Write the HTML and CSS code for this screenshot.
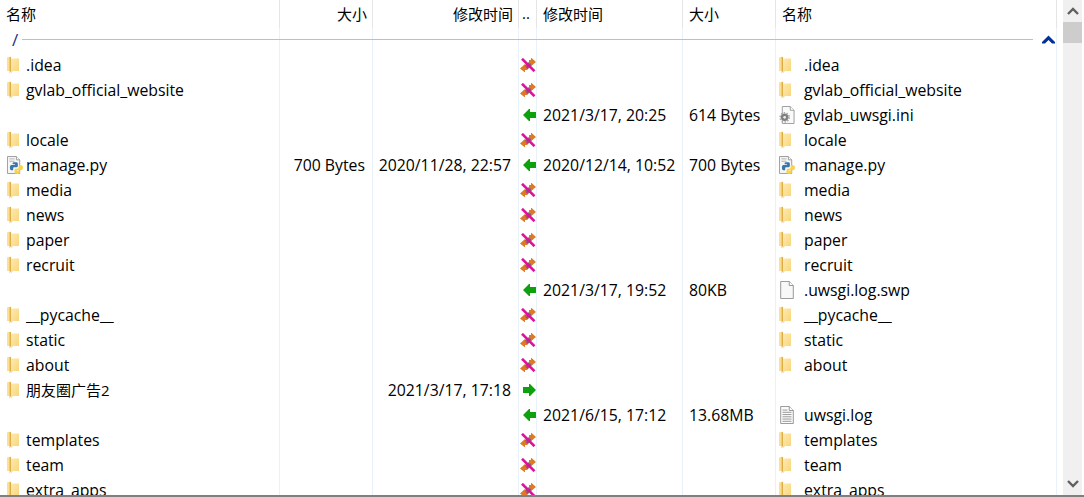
FILE: index.html
```html
<!DOCTYPE html>
<html lang="en">
<head>
    <meta charset="UTF-8">
    <title>File compare</title>
    <link rel="stylesheet" href="styles.css">
</head>
<body>
    <svg class="icon-defs" width="0" height="0">
        <defs>
            <linearGradient id="folder-front" x1="0" y1="0" x2="1" y2="1">
                <stop offset="0" stop-color="#fdeab0"/>
                <stop offset="1" stop-color="#f8d477"/>
            </linearGradient>
            <symbol id="folder" viewBox="0 0 16 18">
                <path d="M0 1.5 L3.5 .5 L4.5 3 H12 V15 H0 Z" fill="#fadf94"/>
                <path d="M2.6 1 L4 1 V15 L2.6 17.5 Z" fill="#dfae48"/>
                <path d="M4 2.5 H12 V15 H6 L4 17.5 Z" fill="url(#folder-front)"/>
            </symbol>
            <symbol id="file" viewBox="0 0 17 20">
                <path d="M1.5 .5 H11 L15.5 5 V19.5 H1.5 Z" fill="#f8f8f8" stroke="#8c8c8c"/>
                <path d="M11 .5 V5 H15.5" fill="#fff" stroke="#8c8c8c"/>
            </symbol>
            <symbol id="file-log" viewBox="0 0 17 20">
                <path d="M1.5 .5 H11 L15.5 5 V19.5 H1.5 Z" fill="#fbfbfb" stroke="#8c8c8c"/>
                <path d="M11 .5 V5 H15.5" fill="#fff" stroke="#8c8c8c"/>
                <path d="M3.5 4.5 H9 M3.5 7 H13.5 M3.5 9.5 H13.5 M3.5 12 H13.5 M3.5 14.5 H13.5 M3.5 17 H13.5" stroke="#8f8f8f"/>
            </symbol>
            <symbol id="file-ini" viewBox="0 0 17 19">
                <path d="M3.5 .5 H12 L16 4.5 V18.5 H3.5 Z" fill="#fafafa" stroke="#9a9a9a"/>
                <path d="M12 .5 V4.5 H16" fill="#fff" stroke="#9a9a9a"/>
                <circle cx="6" cy="12" r="4" fill="#808080"/>
                <circle cx="6" cy="12" r="4.8" fill="none" stroke="#a8a8a8" stroke-dasharray="1.5 1.5" stroke-width="1.8"/>
                <circle cx="6" cy="12" r="1.4" fill="#eee"/>
            </symbol>
            <symbol id="file-py" viewBox="0 0 17 19">
                <path d="M.5 .5 H10 L13.5 4 V18.5 H.5 Z" fill="#f6f6f6" stroke="#9a9a9a"/>
                <path d="M10 .5 V4 H13.5" fill="#fff" stroke="#9a9a9a"/>
                <path d="M2.5 3 H8 M2.5 5.5 H8" stroke="#b0b0b0"/>
                <path d="M6 7.5 Q6 6.5 7.5 6.5 H10 Q11.5 6.5 11.5 8 V10.5 Q11.5 12 10 12 H7.5 Q6.5 12 6.5 13.5 V15 H4.5 Q3 15 3 12.5 Q3 9.5 4.5 9.5 H8.5 V8.8 H6 Z" fill="#3a76ab"/>
                <path d="M12.5 9.5 H14 Q17 9.5 17 12.5 Q17 15 15 15 H10.5 V15.7 H13.5 V17.5 Q13.5 19 11 19 Q8 19 8 17.5 V15 Q8 13.5 9.5 13.5 H11 Q12.5 13.5 12.5 12 Z" fill="#fbd344"/>
            </symbol>
            <symbol id="arrow-left" viewBox="0 0 13 12">
                <path d="M0 6 L6 0 H7 V3 H13 V9 H7 V12 H6 Z" fill="#0da10d"/>
            </symbol>
            <symbol id="arrow-right" viewBox="0 0 13 12">
                <path d="M13 6 L7 0 H6 V3 H0 V9 H6 V12 H7 Z" fill="#0da10d"/>
            </symbol>
            <symbol id="conflict" viewBox="0 0 16 14">
                <path d="M4 7.5 L12 2 L13 6 L7 12 H4 Z" fill="#77706d"/>
                <path d="M0 10.5 L5 6 V8.5 H7 V12 H5 V14.5 Z" fill="#dd7a28"/>
                <path d="M16 4 L11 -.5 V2 H9 V5.5 H11 V8 Z" fill="#dd7a28"/>
                <path d="M2 .8 L14.5 13.2" stroke="#e0109a" stroke-width="2.6"/>
                <path d="M6 10 L10 6" stroke="#e0109a" stroke-width="1.5" opacity=".7"/>
            </symbol>
        </defs>
    </svg>

    <div class="window">
        <div class="panes">
            <div class="row header">
                <div class="cell">名称</div>
                <div class="cell right">大小</div>
                <div class="cell right">修改时间</div>
                <div class="cell dots">..</div>
                <div class="cell">修改时间</div>
                <div class="cell">大小</div>
                <div class="cell">名称</div>
            </div>
            <div class="row path-row">
                <div class="cell"></div><div class="cell"></div><div class="cell"></div><div class="cell"></div><div class="cell"></div><div class="cell"></div><div class="cell"></div>
                <div class="path-bar">
                    <span class="path-text">/</span>
                    <span class="path-line"></span>
                    <svg class="path-up" width="13" height="9" viewBox="0 0 13 9"><path d="M0 7 L6.5 0.5 L13 7 L13 8.5 L10 8.5 L6.5 5 L3 8.5 L0 8.5 Z" fill="#003399"/></svg>
                </div>
            </div>

            <div class="row">
                <div class="cell name"><svg class="ico"><use href="#folder"/></svg>.idea</div>
                <div class="cell right"></div><div class="cell right"></div>
                <div class="cell act"><svg class="ico-act"><use href="#conflict"/></svg></div>
                <div class="cell"></div><div class="cell"></div>
                <div class="cell name name-r"><svg class="ico"><use href="#folder"/></svg>.idea</div>
            </div>
            <div class="row">
                <div class="cell name"><svg class="ico"><use href="#folder"/></svg>gvlab_official_website</div>
                <div class="cell right"></div><div class="cell right"></div>
                <div class="cell act"><svg class="ico-act"><use href="#conflict"/></svg></div>
                <div class="cell"></div><div class="cell"></div>
                <div class="cell name name-r"><svg class="ico"><use href="#folder"/></svg>gvlab_official_website</div>
            </div>
            <div class="row">
                <div class="cell name"></div>
                <div class="cell right"></div><div class="cell right"></div>
                <div class="cell act"><svg class="ico-arrow"><use href="#arrow-left"/></svg></div>
                <div class="cell">2021/3/17, 20:25</div><div class="cell">614 Bytes</div>
                <div class="cell name name-r"><svg class="ico"><use href="#file-ini"/></svg>gvlab_uwsgi.ini</div>
            </div>
            <div class="row">
                <div class="cell name"><svg class="ico"><use href="#folder"/></svg>locale</div>
                <div class="cell right"></div><div class="cell right"></div>
                <div class="cell act"><svg class="ico-act"><use href="#conflict"/></svg></div>
                <div class="cell"></div><div class="cell"></div>
                <div class="cell name name-r"><svg class="ico"><use href="#folder"/></svg>locale</div>
            </div>
            <div class="row">
                <div class="cell name"><svg class="ico"><use href="#file-py"/></svg>manage.py</div>
                <div class="cell right">700 Bytes</div><div class="cell right">2020/11/28, 22:57</div>
                <div class="cell act"><svg class="ico-arrow"><use href="#arrow-left"/></svg></div>
                <div class="cell">2020/12/14, 10:52</div><div class="cell">700 Bytes</div>
                <div class="cell name name-r"><svg class="ico"><use href="#file-py"/></svg>manage.py</div>
            </div>
            <div class="row">
                <div class="cell name"><svg class="ico"><use href="#folder"/></svg>media</div>
                <div class="cell right"></div><div class="cell right"></div>
                <div class="cell act"><svg class="ico-act"><use href="#conflict"/></svg></div>
                <div class="cell"></div><div class="cell"></div>
                <div class="cell name name-r"><svg class="ico"><use href="#folder"/></svg>media</div>
            </div>
            <div class="row">
                <div class="cell name"><svg class="ico"><use href="#folder"/></svg>news</div>
                <div class="cell right"></div><div class="cell right"></div>
                <div class="cell act"><svg class="ico-act"><use href="#conflict"/></svg></div>
                <div class="cell"></div><div class="cell"></div>
                <div class="cell name name-r"><svg class="ico"><use href="#folder"/></svg>news</div>
            </div>
            <div class="row">
                <div class="cell name"><svg class="ico"><use href="#folder"/></svg>paper</div>
                <div class="cell right"></div><div class="cell right"></div>
                <div class="cell act"><svg class="ico-act"><use href="#conflict"/></svg></div>
                <div class="cell"></div><div class="cell"></div>
                <div class="cell name name-r"><svg class="ico"><use href="#folder"/></svg>paper</div>
            </div>
            <div class="row">
                <div class="cell name"><svg class="ico"><use href="#folder"/></svg>recruit</div>
                <div class="cell right"></div><div class="cell right"></div>
                <div class="cell act"><svg class="ico-act"><use href="#conflict"/></svg></div>
                <div class="cell"></div><div class="cell"></div>
                <div class="cell name name-r"><svg class="ico"><use href="#folder"/></svg>recruit</div>
            </div>
            <div class="row">
                <div class="cell name"></div>
                <div class="cell right"></div><div class="cell right"></div>
                <div class="cell act"><svg class="ico-arrow"><use href="#arrow-left"/></svg></div>
                <div class="cell">2021/3/17, 19:52</div><div class="cell">80KB</div>
                <div class="cell name name-r"><svg class="ico"><use href="#file"/></svg>.uwsgi.log.swp</div>
            </div>
            <div class="row">
                <div class="cell name"><svg class="ico"><use href="#folder"/></svg>__pycache__</div>
                <div class="cell right"></div><div class="cell right"></div>
                <div class="cell act"><svg class="ico-act"><use href="#conflict"/></svg></div>
                <div class="cell"></div><div class="cell"></div>
                <div class="cell name name-r"><svg class="ico"><use href="#folder"/></svg>__pycache__</div>
            </div>
            <div class="row">
                <div class="cell name"><svg class="ico"><use href="#folder"/></svg>static</div>
                <div class="cell right"></div><div class="cell right"></div>
                <div class="cell act"><svg class="ico-act"><use href="#conflict"/></svg></div>
                <div class="cell"></div><div class="cell"></div>
                <div class="cell name name-r"><svg class="ico"><use href="#folder"/></svg>static</div>
            </div>
            <div class="row">
                <div class="cell name"><svg class="ico"><use href="#folder"/></svg>about</div>
                <div class="cell right"></div><div class="cell right"></div>
                <div class="cell act"><svg class="ico-act"><use href="#conflict"/></svg></div>
                <div class="cell"></div><div class="cell"></div>
                <div class="cell name name-r"><svg class="ico"><use href="#folder"/></svg>about</div>
            </div>
            <div class="row">
                <div class="cell name"><svg class="ico"><use href="#folder"/></svg><span class="cjk">朋友圈广告2</span></div>
                <div class="cell right"></div><div class="cell right">2021/3/17, 17:18</div>
                <div class="cell act"><svg class="ico-arrow"><use href="#arrow-right"/></svg></div>
                <div class="cell"></div><div class="cell"></div>
                <div class="cell name name-r"></div>
            </div>
            <div class="row">
                <div class="cell name"></div>
                <div class="cell right"></div><div class="cell right"></div>
                <div class="cell act"><svg class="ico-arrow"><use href="#arrow-left"/></svg></div>
                <div class="cell">2021/6/15, 17:12</div><div class="cell">13.68MB</div>
                <div class="cell name name-r"><svg class="ico"><use href="#file-log"/></svg>uwsgi.log</div>
            </div>
            <div class="row">
                <div class="cell name"><svg class="ico"><use href="#folder"/></svg>templates</div>
                <div class="cell right"></div><div class="cell right"></div>
                <div class="cell act"><svg class="ico-act"><use href="#conflict"/></svg></div>
                <div class="cell"></div><div class="cell"></div>
                <div class="cell name name-r"><svg class="ico"><use href="#folder"/></svg>templates</div>
            </div>
            <div class="row">
                <div class="cell name"><svg class="ico"><use href="#folder"/></svg>team</div>
                <div class="cell right"></div><div class="cell right"></div>
                <div class="cell act"><svg class="ico-act"><use href="#conflict"/></svg></div>
                <div class="cell"></div><div class="cell"></div>
                <div class="cell name name-r"><svg class="ico"><use href="#folder"/></svg>team</div>
            </div>
            <div class="row">
                <div class="cell name"><svg class="ico"><use href="#folder"/></svg>extra_apps</div>
                <div class="cell right"></div><div class="cell right"></div>
                <div class="cell act"><svg class="ico-act"><use href="#conflict"/></svg></div>
                <div class="cell"></div><div class="cell"></div>
                <div class="cell name name-r"><svg class="ico"><use href="#folder"/></svg>extra_apps</div>
            </div>
        </div>

        <div class="scrollbar">
            <svg class="scroll-btn" width="12" height="8" viewBox="0 0 12 8"><path d="M1 7 L6 2 L11 7" fill="none" stroke="#606060" stroke-width="2.4"/></svg>
            <div class="scroll-thumb"></div>
            <div class="scroll-space"></div>
            <svg class="scroll-btn" width="12" height="8" viewBox="0 0 12 8"><path d="M1 1 L6 6 L11 1" fill="none" stroke="#606060" stroke-width="2.4"/></svg>
        </div>
    </div>
</body>
</html>
```

FILE: styles.css
```css
html, body {
    margin: 0;
    padding: 0;
    height: 100%;
    overflow: hidden;
    background-color: #fff;
}
body {
    font-family: "Open Sans", "Noto Sans CJK SC", sans-serif;
    font-size: 15.8px;
    color: #000;
}
.icon-defs {
    position: absolute;
}
.window {
    display: flex;
    height: 495px;
    border-bottom: 2px solid #7f7f7f;
    overflow: hidden;
}
.panes {
    width: 1057px;
    flex: none;
}
.row {
    display: grid;
    grid-template-columns: 280px 93px 146px 18px 146px 93px 281px;
    height: 25px;
}
.cell {
    display: flex;
    align-items: center;
    box-sizing: border-box;
    border-right: 1px solid #e9f1fb;
    padding: 0 6px 2px;
    white-space: nowrap;
    overflow: hidden;
}
.cell.right {
    justify-content: flex-end;
    padding-right: 7px;
}
.cell.name {
    padding-left: 7px;
}
.cell.name-r {
    padding-left: 3px;
}
.cell.act {
    padding: 0 0 2px;
    overflow: visible;
}
.cjk {
    font-size: 15px;
}
.header {
    height: 28px;
    font-size: 15px;
}
.header .cell {
    border-right-color: #e5e5e5;
}
.header .cell.right {
    padding-right: 5px;
}
.header .cell.dots {
    padding: 0 0 2px 3px;
}
.ico {
    width: 16px;
    height: 18px;
    margin-right: 3px;
    flex: none;
}
.name-r .ico {
    margin-right: 9px;
}
.ico-act {
    width: 16px;
    height: 14px;
    flex: none;
    margin-left: 1px;
}
.ico-arrow {
    width: 13px;
    height: 12px;
    flex: none;
    margin-left: 4px;
}
.path-row {
    position: relative;
}
.path-bar {
    position: absolute;
    top: 0;
    left: 0;
    right: 0;
    height: 25px;
    display: flex;
    align-items: center;
}
.path-text {
    color: #1a2f8f;
    font-size: 17px;
    margin-left: 12px;
    width: 10px;
    margin-bottom: 2px;
}
.path-line {
    width: 1011px;
    height: 1px;
    margin-top: -3px;
    background-color: #b6bde3;
}
.path-up {
    margin-left: 9px;
    margin-top: -2px;
}
.scrollbar {
    width: 19px;
    margin-left: 6px;
    background-color: #f0f0f0;
    display: flex;
    flex-direction: column;
    align-items: center;
}
.scroll-btn {
    flex: none;
    margin: 7px 0;
}
.scroll-thumb {
    width: 100%;
    height: 21px;
    flex: none;
    background-color: #cdcdcd;
}
.scroll-space {
    flex: 1;
}
```
